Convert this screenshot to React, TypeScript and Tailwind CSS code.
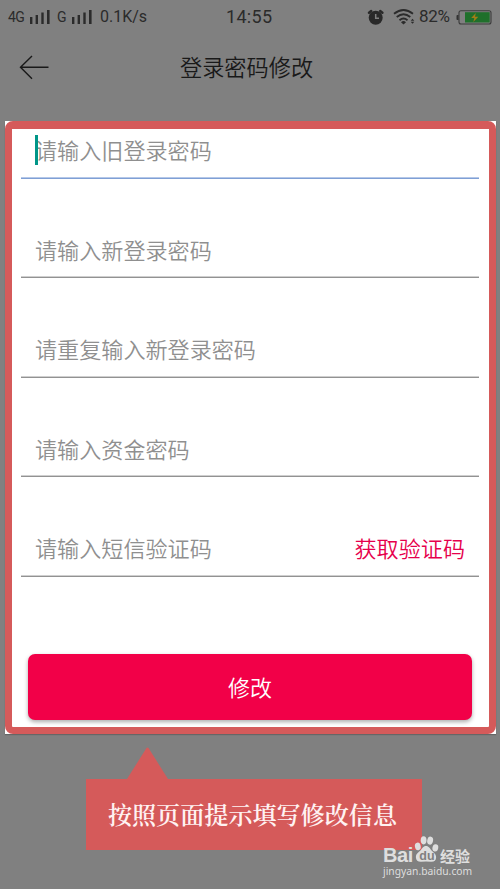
const fields = [
  { placeholder: "请输入旧登录密码", focused: true },
  { placeholder: "请输入新登录密码" },
  { placeholder: "请重复输入新登录密码" },
  { placeholder: "请输入资金密码" },
  { placeholder: "请输入短信验证码", action: "获取验证码" },
];

const Signal = ({ className = "" }: { className?: string }) => (
  <svg width="20" height="14" viewBox="0 0 20 14" fill="#2b2b2b" className={className}>
    <rect x="0" y="7" width="2.4" height="7" />
    <rect x="5.6" y="5" width="2.4" height="9" />
    <rect x="11.3" y="2.5" width="2.4" height="11.5" />
    <rect x="17" y="0" width="2.6" height="14" />
  </svg>
);

const AlarmIcon = () => (
  <svg width="17" height="17" viewBox="0 0 17 17">
    <circle cx="8.7" cy="8.8" r="7" fill="#292929" />
    <path d="M2 3.8 4.2 2M15.4 3.8 13.2 2" stroke="#292929" strokeWidth="2.4" strokeLinecap="round" />
    <path d="M8.7 5v4.2h3.3" fill="none" stroke="#808080" strokeWidth="1.5" />
  </svg>
);

const WifiIcon = () => (
  <svg width="22" height="16" viewBox="0 0 22 16" fill="none" stroke="#2b2b2b" strokeWidth="1.8">
    <path d="M1 4.8Q10.5-2.8 20 4.8" />
    <path d="M3.7 8Q10.5 2.5 17.3 8" />
    <path d="M6.5 11.2Q10.5 7.7 14.5 11.2" />
    <path d="m8 13.2 2.5 2.3 2.5-2.3Q10.5 11 8 13.2Z" fill="#2b2b2b" stroke="none" />
    <path d="m17.7 11.7 1.8-2 1.8 2ZM17.7 12.8l1.8 2 1.8-2Z" fill="#2b2b2b" stroke="none" />
  </svg>
);

const BatteryIcon = () => (
  <svg width="36" height="15" viewBox="0 0 36 15">
    <path d="M2.6 5H1.3Q.5 5 .5 6v3q0 1 .8 1h1.3Z" fill="#333" />
    <rect x="3" y=".8" width="32" height="13.2" rx="2" fill="none" stroke="#3b3b3b" strokeWidth="1.1" />
    <rect x="9" y="2.2" width="24.7" height="10.3" fill="#1f702b" />
    <path d="M19.8 3 15.2 8h3.1l-1 4 5-5.3h-3.3Z" fill="#a17d16" />
  </svg>
);

const StatusBar = () => (
  <div className="flex h-[34px] text-[#2b2b2b] font-['Roboto',sans-serif]">
    <div className="flex w-[226px] items-center pl-2">
      <span className="w-[22px] text-[14px] tracking-[-0.5px]">4G</span>
      <Signal className="-mt-px" />
      <span className="ml-[7px] w-[15px] text-[14px]">G</span>
      <Signal className="-mt-px" />
      <span className="ml-[8px] text-[16px]">0.1K/s</span>
    </div>
    <span className="w-[141px] pt-[3px] text-[18px] tracking-[0.3px]">14:55</span>
    <div className="flex items-center">
      <AlarmIcon />
      <span className="ml-[9px] w-[26px]">
        <WifiIcon />
      </span>
      <span className="w-[37px] text-[17px] tracking-[-0.3px]">82%</span>
      <BatteryIcon />
    </div>
  </div>
);

const Header = () => (
  <header className="flex h-[87px] pt-4 text-[#191919]">
    <svg width="30" height="26" viewBox="0 0 30 26" fill="none" stroke="currentColor" strokeWidth="1.4" className="ml-[19px] mt-1">
      <path d="M29.5 13.3H1.5M13 2 1.5 13.3 13 24.7" />
    </svg>
    <h1 className="ml-[131px] text-[22.2px] font-[350] leading-[33px]">登录密码修改</h1>
  </header>
);

const Watermark = () => (
  <div className="absolute left-[383px] top-[835px] w-[92px] text-[#dedede]">
    <div className="flex h-[29px] items-end">
      <span className="-mb-[3px] w-[30px] text-[20px] font-bold leading-[24px] tracking-[-0.4px] font-['Liberation_Sans',sans-serif]">Bai</span>
      <svg width="26" height="28" viewBox="0 0 27 28" fill="#dedede" className="mb-px">
        <ellipse cx="5" cy="11.3" rx="3" ry="4" transform="rotate(-12 5 11.3)" />
        <ellipse cx="11" cy="5" rx="3" ry="4.2" />
        <ellipse cx="17.8" cy="5.3" rx="3" ry="4.2" transform="rotate(12 17.8 5.3)" />
        <ellipse cx="23.2" cy="12.8" rx="3" ry="3.8" transform="rotate(12 23.2 12.8)" />
        <path d="M13.5 11c-3 0-4 2.7-5.5 4.3C5.7 17.6 3 18.7 3 22.5 3 26 5.5 27.5 8.5 27.3q5-.7 10 0c3.4.3 5.5-1.4 5.5-4.8 0-3.6-3-5-5-7.2-1.6-1.7-2.5-4.3-5.5-4.3Z" />
        <text x="6.5" y="25" fontFamily="Liberation Sans, sans-serif" fontSize="13" fontWeight="700" fill="#808080">du</text>
      </svg>
      <span className="-mb-[4px] ml-px text-[15px] font-bold leading-[25px]">经验</span>
    </div>
    <div className="text-[10.3px] leading-[14px] whitespace-nowrap font-['Noto_Sans',sans-serif]">jingyan.baidu.com</div>
  </div>
);

export default function App() {
  return (
    <div className="relative h-[889px] w-[500px] overflow-hidden bg-[#808080] font-['Noto_Sans_CJK_SC',sans-serif]">
      <StatusBar />
      <Header />
      <main className="ml-[5px] h-[613px] w-[491px] bg-white shadow-[0_1px_1px_#666]">
        <div className="h-full rounded-[8px] border-[7px] border-t-[8px] border-[#d55a5a] pl-[9px] pr-[10px]">
          {fields.map(({ placeholder, focused, action }, i) => (
            <div
              key={placeholder}
              className={`flex items-end justify-between border-b px-[14px] pb-[11.7px] text-[22.1px] leading-[34px] ${
                i === 0 ? "h-[49.8px]" : "h-[99.5px]"
              } ${
                focused
                  ? "border-[#7f9fd5] shadow-[inset_0_-1px_#b5c8e8]"
                  : "border-[#929292] shadow-[inset_0_-1px_#cfcfcf]"
              }`}
            >
              <div className="relative font-[350] text-[#8f8f8f]">
                {focused && <span className="absolute left-0 top-[3px] h-[30px] w-[2.5px] bg-[#009688]" />}
                {placeholder}
              </div>
              {action && <button className="font-[350] text-[#e6004c]">{action}</button>}
            </div>
          ))}
          <button className="ml-[7px] mt-[77px] block h-[66px] w-[444px] rounded-[7px] bg-[#f20048] pb-px text-[22px] font-[350] text-white shadow-[0_2px_4px_#00000055]">
            修改
          </button>
        </div>
      </main>
      <div className="ml-[86px] mt-[13px] w-[336px]">
        <svg width="41" height="32" viewBox="0 0 41 32" className="ml-[41px] block">
          <path d="M0 32 19.5 1q1-1 2 0L41 32Z" fill="#d55a5a" />
        </svg>
        <div className="h-[71px] bg-[#d55a5a] pr-[3px] text-center text-[24.1px] font-semibold leading-[70px] text-[#fff2f2] font-['Noto_Serif_CJK_SC','Noto_Serif_SC','Noto_Sans_CJK_SC',serif]">
          按照页面提示填写修改信息
        </div>
      </div>
      <Watermark />
    </div>
  );
}
